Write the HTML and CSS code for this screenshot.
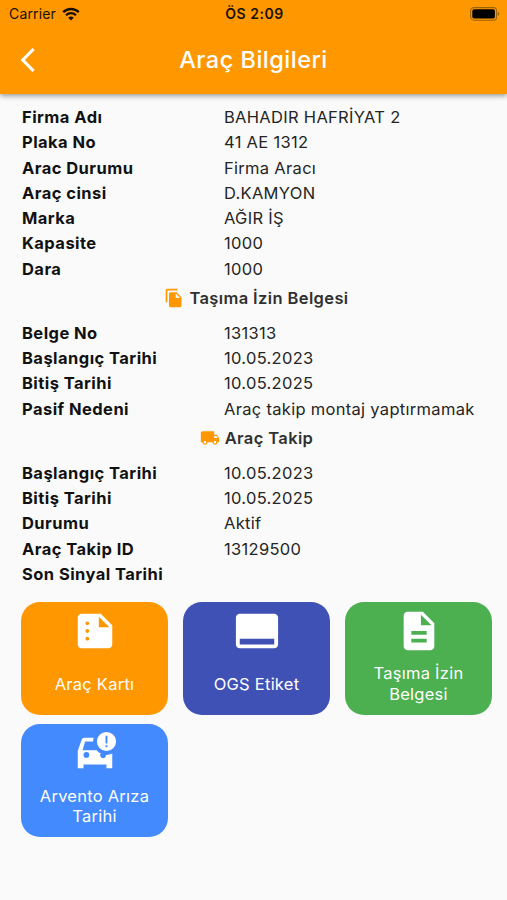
FILE: index.html
```html
<!DOCTYPE html>
<html lang="tr">
<head>
    <meta charset="UTF-8">
    <meta name="viewport" content="width=device-width, initial-scale=1.0">
    <title>Araç Bilgileri</title>
    <link rel="stylesheet" href="styles.css">
</head>
<body>

<header class="header">
    <div class="status-bar">
        <div class="carrier">
            <span>Carrier</span>
            <svg class="wifi" viewBox="0 0 18 14">
                <path d="M1.2 5.2a11 11 0 0 1 15.6 0" fill="none" stroke="#1a1000" stroke-width="2.4"/>
                <path d="M4 8.2a7.1 7.1 0 0 1 10 0" fill="none" stroke="#1a1000" stroke-width="2.2"/>
                <path d="M9 13.6L6.2 10.8a4 4 0 0 1 5.6 0z" fill="#1a1000"/>
            </svg>
        </div>
        <span class="clock">ÖS 2:09</span>
        <svg class="battery" viewBox="0 0 30 14">
            <rect x="0.6" y="0.6" width="26" height="12.6" rx="3.4" fill="none" stroke="#9b6206" stroke-width="1.1"/>
            <rect x="2.3" y="2.3" width="22.6" height="9.2" rx="1.8" fill="#000"/>
            <path d="M27.8 4.8c2 .8 2 3.4 0 4.2z" fill="#9b6206"/>
        </svg>
    </div>
    <div class="title-bar">
        <svg class="back" viewBox="0 0 16 26">
            <path d="M13.6 2L2.8 13l10.800 11" fill="none" stroke="#fff" stroke-width="3.2"/>
        </svg>
        <h1 class="title">Araç Bilgileri</h1>
    </div>
</header>

<main class="content">
    <dl class="info">
        <dt>Firma Adı</dt><dd>BAHADIR HAFRİYAT 2</dd>
        <dt>Plaka No</dt><dd>41 AE 1312</dd>
        <dt>Arac Durumu</dt><dd>Firma Aracı</dd>
        <dt>Araç cinsi</dt><dd>D.KAMYON</dd>
        <dt>Marka</dt><dd>AĞIR İŞ</dd>
        <dt>Kapasite</dt><dd>1000</dd>
        <dt>Dara</dt><dd>1000</dd>
    </dl>

    <h2 class="section-title">
        <svg viewBox="0 0 24 24"><path d="M16 1H4c-1.1 0-2 .9-2 2v14h2V3h12V1zm-1 4l6 6v10c0 1.1-.9 2-2 2H7.99C6.89 23 6 22.1 6 21l.01-14c0-1.1.89-2 1.99-2h7zm-1 7h5.5L14 6.5V12z"/></svg>
        <span>Taşıma İzin Belgesi</span>
    </h2>
    <dl class="info">
        <dt>Belge No</dt><dd>131313</dd>
        <dt>Başlangıç Tarihi</dt><dd>10.05.2023</dd>
        <dt>Bitiş Tarihi</dt><dd>10.05.2025</dd>
        <dt>Pasif Nedeni</dt><dd>Araç takip montaj yaptırmamak</dd>
    </dl>

    <h2 class="section-title">
        <svg viewBox="0 0 24 24"><path d="M20 8h-3V4H3c-1.1 0-2 .9-2 2v11h2c0 1.66 1.34 3 3 3s3-1.34 3-3h6c0 1.66 1.34 3 3 3s3-1.34 3-3h2v-5l-3-4zM6 18.5c-.83 0-1.5-.67-1.5-1.5s.67-1.5 1.5-1.5 1.5.67 1.5 1.5-.67 1.5-1.5 1.5zm13.5-9l1.96 2.5H17V9.5h2.5zm-1.5 9c-.83 0-1.5-.67-1.5-1.5s.67-1.5 1.5-1.5 1.5.67 1.5 1.5-.67 1.5-1.5 1.5z"/></svg>
        <span>Araç Takip</span>
    </h2>
    <dl class="info">
        <dt>Başlangıç Tarihi</dt><dd>10.05.2023</dd>
        <dt>Bitiş Tarihi</dt><dd>10.05.2025</dd>
        <dt>Durumu</dt><dd>Aktif</dd>
        <dt>Araç Takip ID</dt><dd>13129500</dd>
        <dt>Son Sinyal Tarihi</dt><dd></dd>
    </dl>

    <!-- Action buttons -->
    <div class="tiles">
        <button class="tile orange">
            <svg viewBox="0 0 24 24"><path d="M15 3H5c-1.1 0-1.99.9-1.99 2L3 19c0 1.1.89 2 1.99 2H19c1.1 0 2-.9 2-2V9l-6-6zM8 17c-.55 0-1-.45-1-1s.45-1 1-1 1 .45 1 1-.45 1-1 1zm0-4c-.55 0-1-.45-1-1s.45-1 1-1 1 .45 1 1-.45 1-1 1zm0-4c-.55 0-1-.45-1-1s.45-1 1-1 1 .45 1 1-.45 1-1 1zm6 1V4.5l5.5 5.5H14z"/></svg>
            <span class="tile-label">Araç Kartı</span>
        </button>
        <button class="tile indigo">
            <svg viewBox="0 0 24 24"><path d="M21 3H3c-1.1 0-2 .9-2 2v14c0 1.1.9 2 2 2h18c1.1 0 2-.9 2-2V5c0-1.1-.9-2-2-2zm0 16H3v-3h18v3z"/></svg>
            <span class="tile-label">OGS Etiket</span>
        </button>
        <button class="tile green">
            <svg viewBox="0 0 24 24"><path d="M14 2H6c-1.1 0-1.99.9-1.99 2L4 20c0 1.1.89 2 1.99 2H18c1.1 0 2-.9 2-2V8l-6-6zm2 16H8v-2h8v2zm0-4H8v-2h8v2zm-3-5V3.5L18.5 9H13z"/></svg>
            <span class="tile-label">Taşıma İzin Belgesi</span>
        </button>
        <button class="tile blue">
            <svg viewBox="0 0 24 24"><path fill-rule="evenodd" d="M18 1a5 5 0 1 0 0 10 5 5 0 0 0 0-10zm-.5 2h1v4h-1zm0 5h1v1h-1zM11.3 4H6.5c-.66 0-1.21.42-1.42 1.01L3 11v9h3v-2h12v2h3v-7.7a7 7 0 0 1-3 .7c-.1 0-.2 0-.3 0a1.5 1.5 0 1 1-2.7-.7A7 7 0 0 1 12.9 10.5H5.5L6.85 6H11a7 7 0 0 1 .3-2zM7.5 11.5a1.5 1.5 0 1 1 0 3 1.5 1.5 0 0 1 0-3z"/></svg>
            <span class="tile-label">Arvento Arıza Tarihi</span>
        </button>
    </div>
</main>

</body>
</html>
```
FILE: styles.css
```css
* {
    box-sizing: border-box;
}
body {
    margin: 0;
    min-height: 900px;
    background-color: #fafafa;
    font-family: Inter, sans-serif;
    color: #252525;
}
.header {
    height: 94px;
    background-color: #ff9800;
    box-shadow: 0 2px 5px rgba(0, 0, 0, 0.38);
}
.status-bar {
    display: grid;
    grid-template-columns: 1fr auto 1fr;
    align-items: center;
    height: 27px;
    padding: 0 7px 0 9px;
    font-size: 14px;
    color: #1a1000;
}
.carrier {
    display: flex;
    align-items: center;
    gap: 6px;
    letter-spacing: 0.15px;
}
.wifi {
    width: 18px;
    height: 14px;
}
.clock {
    font-weight: 600;
    letter-spacing: 0.5px;
}
.battery {
    width: 30px;
    height: 14px;
    justify-self: end;
}
.title-bar {
    display: grid;
    grid-template-columns: 60px 1fr 60px;
    align-items: center;
    height: 65px;
}
.back {
    width: 16px;
    height: 26px;
    margin-left: 20px;
}
.title {
    margin: 0;
    font-size: 23.5px;
    font-weight: 500;
    letter-spacing: 0.5px;
    text-align: center;
    color: white;
}
.content {
    padding: 10.4px 15px 0 21px;
}
.info {
    display: grid;
    grid-template-columns: 202px 1fr;
    grid-auto-rows: 25.25px;
    align-items: center;
    margin: 0;
    padding-left: 1px;
    font-size: 16.5px;
}
.info dt {
    font-weight: 700;
    letter-spacing: 0.45px;
    color: #111;
}
.info dd {
    margin: 0;
    letter-spacing: 0.3px;
}
.section-title {
    display: flex;
    align-items: center;
    justify-content: center;
    gap: 5px;
    height: 39px;
    margin: 0;
    padding-bottom: 5px;
    font-size: 16.5px;
    font-weight: 600;
    letter-spacing: 0.38px;
    color: #303030;
}
.section-title svg {
    width: 20px;
    height: 20px;
    fill: #ff9800;
}
.tiles {
    display: grid;
    grid-template-columns: repeat(3, 147px);
    grid-auto-rows: 113px;
    gap: 9.5px 15px;
    margin-top: 15.5px;
}
.tile {
    display: flex;
    flex-direction: column;
    align-items: center;
    padding: 6px 14px 1px;
    border: none;
    border-radius: 19px;
    font-family: inherit;
    font-size: 16.5px;
    line-height: 20.5px;
    letter-spacing: 0.25px;
    color: white;
}
.tile svg {
    flex: none;
    width: 46px;
    height: 46px;
    fill: white;
}
.tile-label {
    display: flex;
    flex: 1;
    align-items: center;
    text-align: center;
}
.orange {
    background-color: #ff9800;
}
.indigo {
    background-color: #3f51b5;
}
.green {
    background-color: #4caf50;
}
.blue {
    background-color: #448aff;
}
```
